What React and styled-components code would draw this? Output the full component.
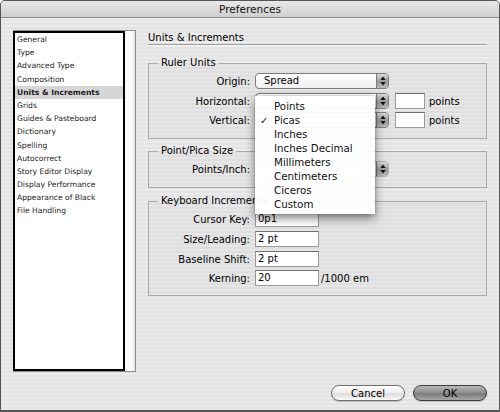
import React from 'react';
import styled, { createGlobalStyle } from 'styled-components';

const GlobalStyle = createGlobalStyle`
  html, body { margin: 0; padding: 0; background: #fff; }
  body { font-family: "DejaVu Sans", "Liberation Sans", sans-serif; color: #000; }
  * { box-sizing: border-box; }
`;

const categories = [
  'General', 'Type', 'Advanced Type', 'Composition', 'Units & Increments',
  'Grids', 'Guides & Pasteboard', 'Dictionary', 'Spelling', 'Autocorrect',
  'Story Editor Display', 'Display Performance', 'Appearance of Black', 'File Handling',
];

const units = ['Points', 'Picas', 'Inches', 'Inches Decimal', 'Millimeters', 'Centimeters', 'Ciceros', 'Custom'];

const Window = styled.div`
  width: 500px;
  height: 412px;
  display: flex;
  flex-direction: column;
  border: 1px solid #555;
  border-bottom-width: 2px;
  border-radius: 5px 5px 0 0;
  overflow: hidden;
  background: repeating-linear-gradient(180deg, #ebebeb 0 2px, #e3e3e3 2px 4px);
`;

const TitleBar = styled.div`
  height: 17px;
  flex: none;
  display: flex;
  align-items: center;
  justify-content: center;
  font-size: 10.5px;
  color: #111;
  background: linear-gradient(#e8e8e8, #cfcfcf);
  border-bottom: 1px solid #8a8a8a;
`;

const Body = styled.div`
  display: flex;
  padding: 12px 12px 0 12px;
  height: 354px;
`;

const Sidebar = styled.div`
  display: flex;
  width: 123px;
  height: 342px;
  border: 1px solid #8c8c8c;
  border-left: none;
`;

const List = styled.ul`
  list-style: none;
  margin: 0;
  padding: 0;
  width: 112px;
  height: 100%;
  background: #fff;
  border: 2px solid #000;
`;

const Item = styled.li`
  height: 13.2px;
  line-height: 13.2px;
  padding-left: 2px;
  font-size: 7.6px;
  color: #222;
  white-space: nowrap;
  font-weight: ${p => (p.$active ? 'bold' : 'normal')};
  background: ${p => (p.$active ? '#d6d6d6' : 'transparent')};
`;

const Scroller = styled.div`
  flex: 1;
  background: linear-gradient(90deg, #fafafa, #ffffff 60%, #e6e6e6);
`;

const Main = styled.div`
  width: 339px;
  margin-left: 12px;
`;

const Heading = styled.div`
  font-size: 10px;
  padding-top: 2px;
  height: 15px;
  border-bottom: 1px solid #9c9c9c;
  box-shadow: 0 1px 0 #f6f6f6;
`;

const Group = styled.fieldset`
  margin: ${p => p.$top}px 0 0 0;
  padding: 4px 0 ${p => p.$bottom}px 0;
  border: 1px solid #a9a9a9;
  background: rgba(0, 0, 0, 0.02);
  min-width: 0;
`;

const Legend = styled.legend`
  margin-left: 9px;
  padding: 0 3px;
  font-size: 10px;
  line-height: 12px;
`;

const Row = styled.div`
  display: flex;
  align-items: center;
  height: 16px;
  margin-bottom: ${p => p.$gap || 0}px;
`;

const Label = styled.div`
  width: 101px;
  text-align: right;
  font-size: 10px;
  margin-right: 5px;
  white-space: nowrap;
`;

const Popup = styled.div`
  position: relative;
  width: 134px;
  height: 16px;
  display: flex;
  border: 1px solid ${p => (p.$disabled ? '#b0b0b0' : '#7d7d7d')};
  border-radius: 4px;
  background: ${p => (p.$disabled ? '#ececec' : 'linear-gradient(#ffffff, #f0f0f0)')};
`;

const PopupValue = styled.div`
  flex: 1;
  font-size: ${p => (p.$disabled ? 9 : 10)}px;
  line-height: 14px;
  padding-left: ${p => (p.$disabled ? 6 : 8)}px;
  white-space: nowrap;
  color: ${p => (p.$disabled ? '#b4b4b4' : '#000')};
`;

const Arrows = styled.div`
  width: 12px;
  display: flex;
  align-items: center;
  justify-content: center;
  border-left: 1px solid #777;
  border-radius: 0 3px 3px 0;
  background: linear-gradient(#d8d8d8, #9a9a9a 55%, #b8b8b8);
`;

const Field = styled.div`
  width: ${p => p.$w}px;
  height: 16px;
  background: #fff;
  border: 1px solid #9a9a9a;
  border-top-color: #6f6f6f;
  font-size: 10px;
  line-height: 14px;
  padding-left: 2px;
  margin-left: ${p => p.$ml || 0}px;
`;

const Unit = styled.span`
  font-size: 10px;
  margin-left: ${p => p.$ml}px;
`;

const Menu = styled.ul`
  position: absolute;
  z-index: 10;
  left: -1px;
  top: 2px;
  width: 120px;
  margin: 0;
  padding: 3px 0;
  list-style: none;
  background: rgba(255, 255, 255, 0.95);
  box-shadow: 0 4px 9px rgba(0, 0, 0, 0.5), 0 0 1px rgba(0, 0, 0, 0.4);
`;

const MenuItem = styled.li`
  display: flex;
  height: 14px;
  align-items: center;
  font-size: 10.3px;
  color: #111;
`;

const Check = styled.span`
  width: 19px;
  padding-left: 5px;
  font-size: 10px;
  font-weight: bold;
`;

const Footer = styled.div`
  display: flex;
  justify-content: flex-end;
  gap: 8px;
  padding: 13px 12px 0 0;
`;

const Button = styled.button`
  width: 74px;
  height: 16px;
  padding: 0;
  border-radius: 8px;
  font-family: inherit;
  font-size: 10px;
  color: #000;
  border: 1px solid ${p => (p.$primary ? '#3e3e3e' : '#6e6e6e')};
  background: ${p => (p.$primary
    ? 'linear-gradient(#b8b8b8, #8c8c8c 50%, #7a7a7a 55%, #a8a8a8)'
    : 'linear-gradient(#ffffff, #ececec 50%, #dcdcdc 55%, #f8f8f8)')};
  box-shadow: 0 1px 1px rgba(0, 0, 0, 0.2);
`;

const ArrowGlyph = () => (
  <svg width="6" height="10" viewBox="0 0 6 10">
    <path d="M3 0.5 L5.6 4 L0.4 4 Z" fill="#111" />
    <path d="M3 9.5 L5.6 6 L0.4 6 Z" fill="#111" />
  </svg>
);

const Select = ({ value, disabled, children }) => (
  <Popup $disabled={disabled}>
    <PopupValue $disabled={disabled}>{value}</PopupValue>
    <Arrows><ArrowGlyph /></Arrows>
    {children}
  </Popup>
);

export default function App() {
  return (
    <>
      <GlobalStyle />
      <Window>
        <TitleBar>Preferences</TitleBar>
        <Body>
          <Sidebar>
            <List>
              {categories.map(c => (
                <Item key={c} $active={c === 'Units & Increments'}>{c}</Item>
              ))}
            </List>
            <Scroller />
          </Sidebar>
          <Main>
            <Heading>Units &amp; Increments</Heading>
            <Group $top={12} $bottom={10}>
              <Legend>Ruler Units</Legend>
              <Row $gap={4}>
                <Label>Origin:</Label>
                <Select value="Spread" />
              </Row>
              <Row $gap={3}>
                <Label>Horizontal:</Label>
                <Select value="">
                  <Menu>
                    {units.map(u => (
                      <MenuItem key={u}>
                        <Check>{u === 'Picas' ? '✓' : ''}</Check>
                        {u}
                      </MenuItem>
                    ))}
                  </Menu>
                </Select>
                <Field $w={30} $ml={6} />
                <Unit $ml={4}>points</Unit>
              </Row>
              <Row>
                <Label>Vertical:</Label>
                <Select value="" />
                <Field $w={30} $ml={6} />
                <Unit $ml={4}>points</Unit>
              </Row>
            </Group>
            <Group $top={6} $bottom={10}>
              <Legend>Point/Pica Size</Legend>
              <Row>
                <Label>Points/Inch:</Label>
                <Select value="PostScript (72 pts/inch)" disabled />
              </Row>
            </Group>
            <Group $top={7} $bottom={9}>
              <Legend>Keyboard Increments</Legend>
              <Row $gap={4}>
                <Label>Cursor Key:</Label>
                <Field $w={64}>0p1</Field>
              </Row>
              <Row $gap={4}>
                <Label>Size/Leading:</Label>
                <Field $w={64}>2 pt</Field>
              </Row>
              <Row $gap={3}>
                <Label>Baseline Shift:</Label>
                <Field $w={64}>2 pt</Field>
              </Row>
              <Row>
                <Label>Kerning:</Label>
                <Field $w={64}>20</Field>
                <Unit $ml={2}>/1000 em</Unit>
              </Row>
            </Group>
          </Main>
        </Body>
        <Footer>
          <Button>Cancel</Button>
          <Button $primary>OK</Button>
        </Footer>
      </Window>
    </>
  );
}
